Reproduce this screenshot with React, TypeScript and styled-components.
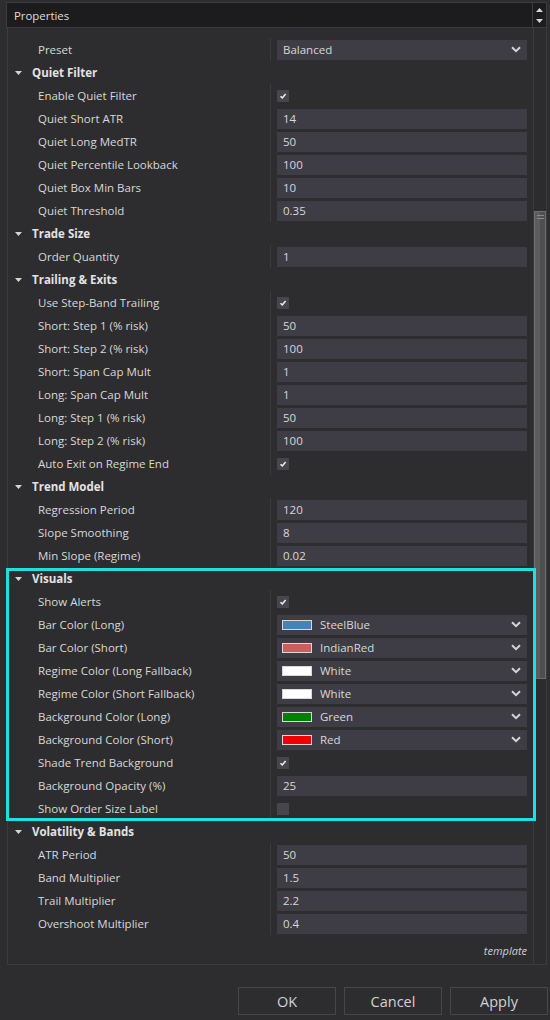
import React from "react";
import styled, { createGlobalStyle } from "styled-components";

type Kind = "text" | "check" | "combo" | "color";

interface IProp {
  label: string;
  kind: Kind;
  value?: string;
  swatch?: string;
  checked?: boolean;
}

interface ISection {
  title: string;
  highlight?: boolean;
  rows: IProp[];
}

const preset: IProp = { label: "Preset", kind: "combo", value: "Balanced" };

const sections: ISection[] = [
  {
    title: "Quiet Filter",
    rows: [
      { label: "Enable Quiet Filter", kind: "check", checked: true },
      { label: "Quiet Short ATR", kind: "text", value: "14" },
      { label: "Quiet Long MedTR", kind: "text", value: "50" },
      { label: "Quiet Percentile Lookback", kind: "text", value: "100" },
      { label: "Quiet Box Min Bars", kind: "text", value: "10" },
      { label: "Quiet Threshold", kind: "text", value: "0.35" },
    ],
  },
  {
    title: "Trade Size",
    rows: [{ label: "Order Quantity", kind: "text", value: "1" }],
  },
  {
    title: "Trailing & Exits",
    rows: [
      { label: "Use Step-Band Trailing", kind: "check", checked: true },
      { label: "Short: Step 1 (% risk)", kind: "text", value: "50" },
      { label: "Short: Step 2 (% risk)", kind: "text", value: "100" },
      { label: "Short: Span Cap Mult", kind: "text", value: "1" },
      { label: "Long: Span Cap Mult", kind: "text", value: "1" },
      { label: "Long: Step 1 (% risk)", kind: "text", value: "50" },
      { label: "Long: Step 2 (% risk)", kind: "text", value: "100" },
      { label: "Auto Exit on Regime End", kind: "check", checked: true },
    ],
  },
  {
    title: "Trend Model",
    rows: [
      { label: "Regression Period", kind: "text", value: "120" },
      { label: "Slope Smoothing", kind: "text", value: "8" },
      { label: "Min Slope (Regime)", kind: "text", value: "0.02" },
    ],
  },
  {
    title: "Visuals",
    highlight: true,
    rows: [
      { label: "Show Alerts", kind: "check", checked: true },
      { label: "Bar Color (Long)", kind: "color", value: "SteelBlue", swatch: "#4682b4" },
      { label: "Bar Color (Short)", kind: "color", value: "IndianRed", swatch: "#cd5c5c" },
      { label: "Regime Color (Long Fallback)", kind: "color", value: "White", swatch: "#ffffff" },
      { label: "Regime Color (Short Fallback)", kind: "color", value: "White", swatch: "#ffffff" },
      { label: "Background Color (Long)", kind: "color", value: "Green", swatch: "#008000" },
      { label: "Background Color (Short)", kind: "color", value: "Red", swatch: "#f00000" },
      { label: "Shade Trend Background", kind: "check", checked: true },
      { label: "Background Opacity (%)", kind: "text", value: "25" },
      { label: "Show Order Size Label", kind: "check", checked: false },
    ],
  },
  {
    title: "Volatility & Bands",
    rows: [
      { label: "ATR Period", kind: "text", value: "50" },
      { label: "Band Multiplier", kind: "text", value: "1.5" },
      { label: "Trail Multiplier", kind: "text", value: "2.2" },
      { label: "Overshoot Multiplier", kind: "text", value: "0.4" },
    ],
  },
];

const GlobalStyle = createGlobalStyle`
  html, body {
    margin: 0;
    padding: 0;
    background: #2d2d30;
  }
  body {
    font-family: "Open Sans", "Noto Sans", sans-serif;
    font-size: 11.5px;
    color: #d6d6d6;
  }
`;

const Window = styled.div`
  width: 550px;
  height: 1020px;
  display: flex;
  flex-direction: column;
  box-sizing: border-box;
  overflow: hidden;
`;

const Header = styled.div`
  margin: 2px 3px 0 6px;
  height: 26px;
  box-sizing: border-box;
  background: #1c1c1d;
  border: 1px solid #3d3d41;
  display: flex;
  align-items: stretch;
`;

const Title = styled.div`
  flex: 1;
  display: flex;
  align-items: center;
  padding-left: 7px;
  font-size: 11.4px;
  color: #dedede;
`;

const Spinner = styled.div`
  width: 13px;
  border-left: 1px solid #3d3d41;
  display: flex;
  flex-direction: column;
  align-items: center;
  justify-content: center;
  gap: 7px;
`;

const Frame = styled.div`
  margin: 0 3px 0 7px;
  height: 937px;
  box-sizing: border-box;
  border: 1px solid #3b3b3f;
  border-top: none;
  display: flex;
`;

const Content = styled.div`
  flex: 1;
  padding-top: 10px;
  display: flex;
  flex-direction: column;
`;

// cyan annotation frame drawn over the Visuals group
const Highlight = styled.div`
  position: relative;

  &::after {
    content: "";
    position: absolute;
    top: 1px;
    bottom: -1px;
    left: -2px;
    right: -3px;
    border: 3px solid #1fe0e0;
    pointer-events: none;
    z-index: 2;
  }
`;

const Row = styled.div`
  display: grid;
  grid-template-columns: 262px 1fr;
  height: 23px;
  align-items: center;
`;

const Label = styled.div`
  padding-left: 30px;
  white-space: nowrap;
  color: #d8d8d8;
`;

const ValueCell = styled.div`
  height: 100%;
  box-sizing: border-box;
  border-left: 1px solid #3b3b3f;
  padding: 0 6px;
  display: flex;
  align-items: center;
`;

const Field = styled.div<{ $pad?: number }>`
  flex: 1;
  height: 20px;
  background: #3e3d45;
  display: flex;
  align-items: center;
  padding: 0 6px 0 ${(p) => p.$pad ?? 6}px;
  color: #d8d8d8;
`;

const FieldText = styled.span`
  flex: 1;
`;

const Swatch = styled.span<{ $color: string }>`
  width: 28px;
  height: 8px;
  border: 1px solid #d8d8d8;
  background: ${(p) => p.$color};
  margin-right: 8px;
`;

const CheckBox = styled.div`
  width: 12px;
  height: 12px;
  background: #46464d;
  display: flex;
  align-items: center;
  justify-content: center;
`;

const CategoryRow = styled.div`
  height: 23px;
  display: flex;
  align-items: center;
  padding-left: 7px;
  gap: 10px;
  font-weight: 700;
  color: #e2e2e2;
`;

const Caption = styled.div`
  margin-top: 9px;
  padding-right: 6px;
  text-align: right;
  font-style: italic;
  font-size: 11px;
  color: #cfcfcf;
  line-height: 14px;
`;

const ScrollTrack = styled.div`
  width: 12px;
  border-left: 1px solid #3b3b3f;
  background: #2c2c2f;
  display: flex;
  flex-direction: column;
`;

const Thumb = styled.div`
  margin-top: 183px;
  height: 468px;
  box-sizing: border-box;
  border: 1px solid #6e6e6e;
  background: linear-gradient(to right, #5c5c5c 0%, #5c5c5c 55%, #4e4e4e 55%);
  display: flex;
  flex-direction: column;
  align-items: center;
  padding-top: 3px;
  gap: 2px;
`;

const Grip = styled.span`
  width: 7px;
  height: 1px;
  background: #8a8a8a;
`;

const Buttons = styled.div`
  margin-top: 22px;
  padding-right: 2px;
  display: flex;
  justify-content: flex-end;
  gap: 8px;
`;

const Button = styled.button`
  width: 98px;
  height: 28px;
  background: #2d2d30;
  border: 1px solid #47474b;
  color: #d2d2d2;
  font-family: "Open Sans", "Noto Sans", sans-serif;
  font-size: 14.5px;
  padding: 0;
`;

const Chevron = () => (
  <svg width="10" height="7" viewBox="0 0 10 7">
    <path d="M1 1.2 L5 5.2 L9 1.2" stroke="#d4d4d4" strokeWidth="2" fill="none" />
  </svg>
);

const Triangle = ({ up }: { up?: boolean }) => (
  <svg width="7" height="4" viewBox="0 0 7 4">
    <path d={up ? "M0 4 L3.5 0 L7 4 Z" : "M0 0 L7 0 L3.5 4 Z"} fill="#d4d4d4" />
  </svg>
);

const Check = () => (
  <svg width="8" height="8" viewBox="0 0 8 8">
    <path d="M1.5 4.3 L3.3 6 L6.6 2" stroke="#f0f0f0" strokeWidth="1.5" fill="none" />
  </svg>
);

const Value: React.FC<{ p: IProp }> = ({ p }) => {
  if (p.kind === "check") {
    return <CheckBox>{p.checked && <Check />}</CheckBox>;
  }
  if (p.kind === "color") {
    return (
      <Field $pad={5}>
        <Swatch $color={p.swatch ?? "#fff"} />
        <FieldText>{p.value}</FieldText>
        <Chevron />
      </Field>
    );
  }
  return (
    <Field>
      <FieldText>{p.value}</FieldText>
      {p.kind === "combo" && <Chevron />}
    </Field>
  );
};

const PropRow: React.FC<{ p: IProp }> = ({ p }) => (
  <Row>
    <Label>{p.label}</Label>
    <ValueCell>
      <Value p={p} />
    </ValueCell>
  </Row>
);

const SectionBlock: React.FC<{ s: ISection }> = ({ s }) => {
  const body = (
    <>
      <CategoryRow>
        <Triangle />
        <span>{s.title}</span>
      </CategoryRow>
      {s.rows.map((r) => (
        <PropRow key={r.label} p={r} />
      ))}
    </>
  );
  return s.highlight ? <Highlight>{body}</Highlight> : body;
};

export default function App() {
  return (
    <Window>
      <GlobalStyle />
      <Header>
        <Title>Properties</Title>
        <Spinner>
          <Triangle up />
          <Triangle />
        </Spinner>
      </Header>
      <Frame>
        <Content>
          <PropRow p={preset} />
          {sections.map((s) => (
            <SectionBlock key={s.title} s={s} />
          ))}
          <Caption>template</Caption>
        </Content>
        <ScrollTrack>
          <Thumb>
            <Grip />
            <Grip />
          </Thumb>
        </ScrollTrack>
      </Frame>
      <Buttons>
        <Button>OK</Button>
        <Button>Cancel</Button>
        <Button>Apply</Button>
      </Buttons>
    </Window>
  );
}
